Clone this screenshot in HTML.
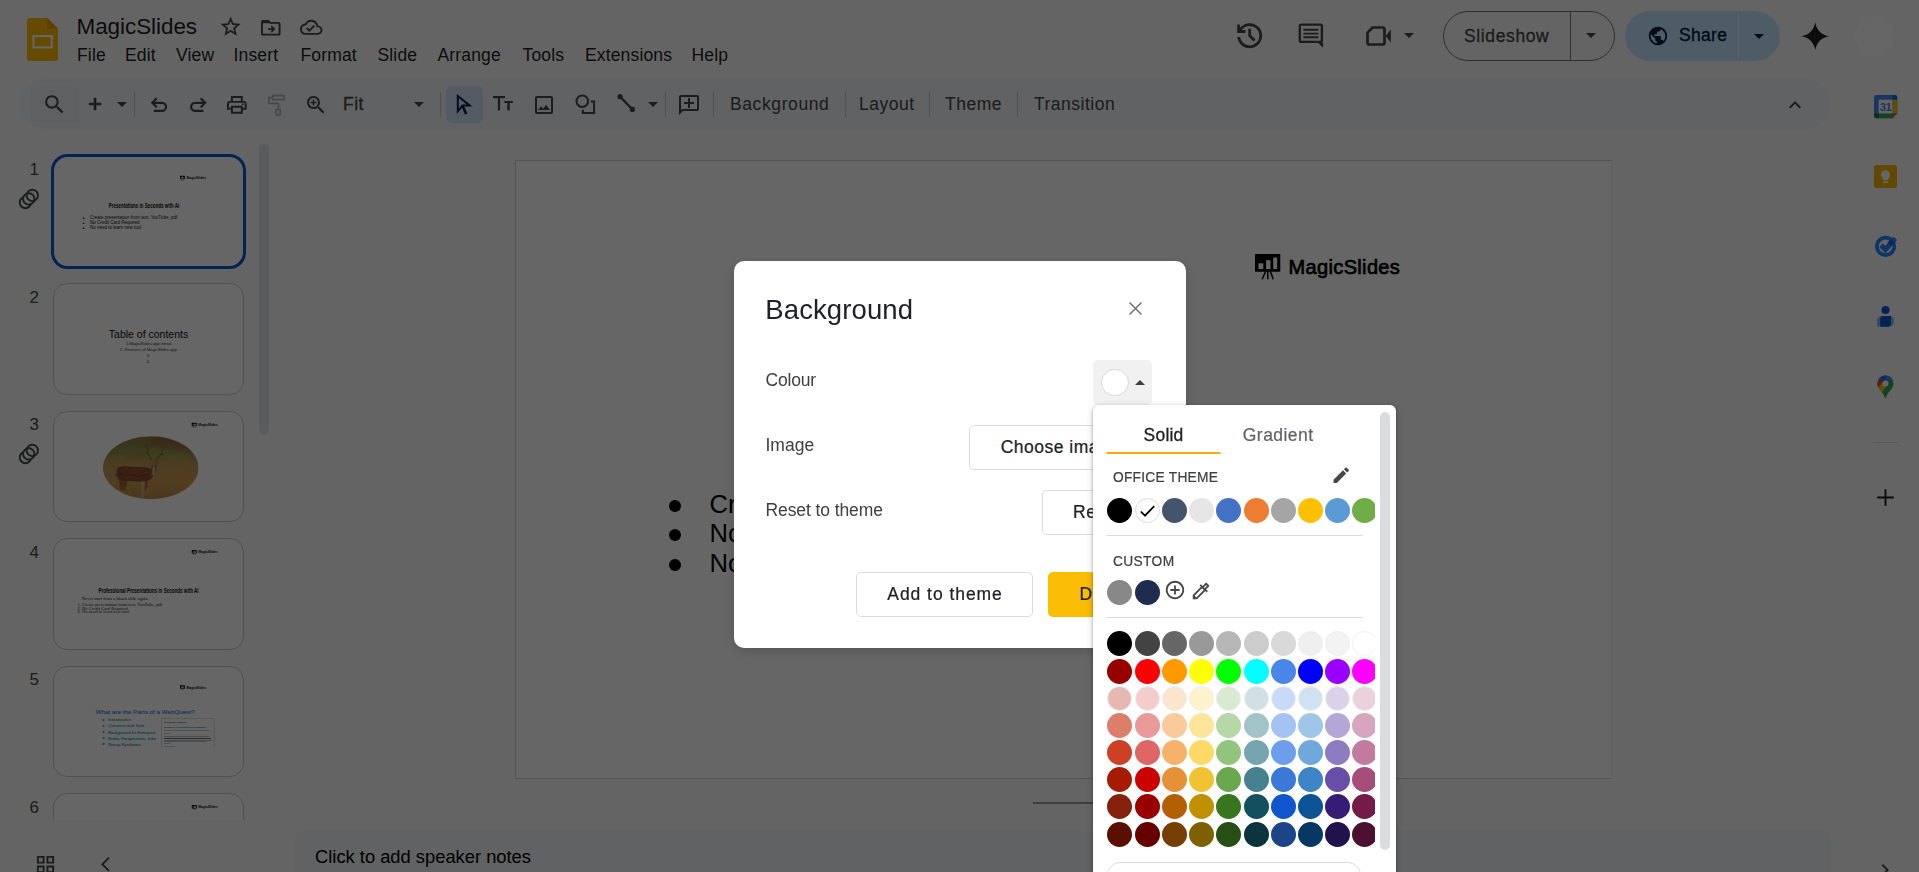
<!DOCTYPE html>
<html lang="en">
<head>
<meta charset="utf-8">
<title>MagicSlides - Google Slides</title>
<style>
*{box-sizing:border-box;margin:0;padding:0}
html,body{width:1919px;height:872px;overflow:hidden;background:#f9fbfd}
body{font-family:"Liberation Sans",Arial,sans-serif;color:#1f1f1f;position:relative}
.abs{position:absolute}
.t{position:absolute;white-space:nowrap;line-height:1}
svg{position:absolute;overflow:visible}
#app{position:absolute;left:0;top:0;width:1919px;height:872px;overflow:hidden}
.menu{font-size:17.5px;color:#1f1f1f;top:47.2px;letter-spacing:.15px}
.tb{font-size:17.5px;color:#444746;top:96.2px}
.sep{position:absolute;width:1px;background:#c4c7c5;top:92px;height:25px}
.num{position:absolute;font-size:17px;color:#444746;width:30px;text-align:right;left:9px;line-height:1}
.thumb{position:absolute;left:53px;width:191px;height:111.25px;border:1px solid #c7c7c7;border-radius:14px;background:#fff;overflow:hidden}
.thumb.sel{left:51px;width:195px;height:115.25px;border:3.4px solid #0b57d0;border-radius:16.5px}
.s4{position:absolute;left:0;top:0;width:756px;height:438px;transform:scale(.25);transform-origin:0 0}
#overlay{position:absolute;left:0;top:0;width:1919px;height:872px;background:rgba(0,0,0,.6)}
#dlg{position:absolute;left:734px;top:261px;width:452px;height:387px;background:#fff;border-radius:10px;box-shadow:0 3px 12px rgba(0,0,0,.18)}
.lbl{font-size:17.5px;color:#3c4043}
.btn{position:absolute;height:44px;border:1px solid #dadce0;border-radius:5px;background:#fff}
.btxt{font-size:17.5px;color:#202124;-webkit-text-stroke:.22px #202124;letter-spacing:.5px}
#pop{position:absolute;left:1093px;top:405px;width:303px;height:480px;background:#fff;border-radius:6px;box-shadow:0 1px 3px rgba(0,0,0,.3),0 2px 6px 1px rgba(0,0,0,.15);overflow:hidden}
.cap{font-size:13.75px;color:#3c4043;letter-spacing:1.1px;-webkit-text-stroke:.2px #3c4043}
.sw{position:absolute;width:25px;height:25px;border-radius:50%}
.hr{position:absolute;height:1px;background:#dadce0;left:13px;width:257px}
</style>
</head>
<body>
<div id="app">
<!-- ===== header ===== -->
<svg style="left:27px;top:18px" width="31" height="43" viewBox="0 0 31 43">
  <path d="M3 0h17.300L31 10.700V40a3 3 0 0 1-3 3H3a3 3 0 0 1-3-3V3a3 3 0 0 1 3-3z" fill="#fbbc04"/>
  <path d="M20.300 0L31 10.700H20.300z" fill="#f29900"/>
  <rect x="6.500" y="18.100" width="18.200" height="11.300" fill="none" stroke="#fff" stroke-width="2.100"/>
</svg>
<div class="t" style="left:76.5px;top:16px;font-size:22.5px;letter-spacing:-.07px;color:#1f1f1f">MagicSlides</div>
<svg style="left:218.900px;top:15.100px" width="23.300" height="23.300" viewBox="0 0 24 24" fill="#444746" stroke="#444746" stroke-width=".3"><path d="M22 9.240l-7.190-.62L12 2 9.190 8.630 2 9.240l5.460 4.730L5.820 21 12 17.270 18.180 21l-1.630-7.030L22 9.240zM12 15.400l-3.760 2.270 1-4.280-3.320-2.880 4.380-.38L12 6.100l1.710 4.040 4.380.38-3.320 2.880 1 4.280L12 15.400z"/></svg>
<svg style="left:259px;top:16.200px" width="23.500" height="23.500" viewBox="0 0 24 24" fill="#444746"><path d="M20 6h-8l-2-2H4c-1.100 0-2 .9-2 2v12c0 1.100.9 2 2 2h16c1.100 0 2-.9 2-2V8c0-1.100-.9-2-2-2zm0 12H4V6h5.170l2 2H20v10z"/><path d="M3 5h7l2 2.500H3z"/><path d="M9.300 12.400h4l-1.400-1.400 1.200-1.200 3.600 3.600-3.600 3.600-1.200-1.200 1.400-1.400H9.300z"/></svg>
<svg style="left:300px;top:15.5px" width="22.5" height="22.5" viewBox="0 0 24 24" fill="#444746"><path d="M19.35 10.04C18.67 6.59 15.64 4 12 4 9.11 4 6.6 5.64 5.35 8.04 2.34 8.36 0 10.91 0 14c0 3.31 2.69 6 6 6h13c2.76 0 5-2.24 5-5 0-2.64-2.05-4.78-4.65-4.96zM19 18H6c-2.21 0-4-1.79-4-4 0-2.05 1.53-3.76 3.56-3.97l1.07-.11.5-.95C8.08 7.14 9.94 6 12 6c2.62 0 4.88 1.86 5.39 4.43l.3 1.5 1.53.11c1.56.1 2.78 1.41 2.78 2.96 0 1.65-1.35 3-3 3zm-9-3.82l-2.09-2.09L6.5 13.5 10 17l6.01-6.01-1.41-1.41z"/></svg>
<div class="t menu" style="left:77px">File</div>
<div class="t menu" style="left:125px">Edit</div>
<div class="t menu" style="left:176px">View</div>
<div class="t menu" style="left:233.5px">Insert</div>
<div class="t menu" style="left:300.5px">Format</div>
<div class="t menu" style="left:377.5px">Slide</div>
<div class="t menu" style="left:437.5px">Arrange</div>
<div class="t menu" style="left:522.5px">Tools</div>
<div class="t menu" style="left:585px">Extensions</div>
<div class="t menu" style="left:691.5px">Help</div>
<!-- header right -->
<svg style="left:1232.700px;top:19.100px" width="33.330" height="33.330" viewBox="0 0 24 24" fill="#444746"><path d="M12 21q-3.450 0-6.012-2.287T3.050 13H5.100q.35 2.600 2.313 4.300T12 19q2.925 0 4.963-2.037T19 12t-2.037-4.963T12 5q-1.725 0-3.225.8T6.250 8H9v2H3V4h2v2.350q1.275-1.600 3.113-2.475T12 3q1.875 0 3.513.713t2.850 1.924 1.925 2.850T21 12t-.712 3.513-1.925 2.850-2.850 1.925T12 21m2.800-4.800L11 12.400V7h2v4.600l3.200 3.200z"/></svg>
<svg style="left:1296px;top:20px" width="30" height="30" viewBox="0 0 30 30"><rect x="3.800" y="4.600" width="22.100" height="17.300" rx="1.600" fill="none" stroke="#444746" stroke-width="2.400"/><path d="M21.600 22.500h5.500v5.300z" fill="#444746"/><path d="M7.400 9.800h15M7.400 13.600h15M7.400 17.300h15" stroke="#444746" stroke-width="1.900"/></svg>
<svg style="left:1364px;top:22px" width="28" height="28" viewBox="0 0 28 28"><path d="M8.600 5.500H18.500a2 2 0 0 1 2 2v13a2 2 0 0 1-2 2H5.500a2 2 0 0 1-2-2V10.600z" fill="none" stroke="#444746" stroke-width="2.700" stroke-linejoin="round"/><path d="M21.700 13.900l5.200-6.300v12.900z" fill="#444746"/></svg>
<svg style="left:1396.900px;top:22.900px" width="24" height="24" viewBox="0 0 24 24" fill="#444746"><path d="M7 10l5 5 5-5z"/></svg>
<div class="abs" style="left:1443px;top:11px;width:172px;height:50px;border:1px solid #747775;border-radius:25px"></div>
<div class="abs" style="left:1570px;top:11px;width:1px;height:50px;background:#747775"></div>
<div class="t" style="left:1464px;top:28px;font-size:17.5px;color:#444746;letter-spacing:.62px;-webkit-text-stroke:.3px #444746">Slideshow</div>
<svg style="left:1579px;top:23px" width="24" height="24" viewBox="0 0 24 24" fill="#444746"><path d="M7 10l5 5 5-5z"/></svg>
<div class="abs" style="left:1625px;top:11px;width:155px;height:50px;background:#c2e7ff;border-radius:25px"></div>
<div class="abs" style="left:1738px;top:11px;width:1px;height:50px;background:#f9fbfd;opacity:.7"></div>
<svg style="left:1646.5px;top:24.5px" width="22" height="22" viewBox="0 0 24 24" fill="#001d35"><path d="M12 2C6.48 2 2 6.48 2 12s4.48 10 10 10 10-4.48 10-10S17.52 2 12 2zm-1 17.93c-3.95-.49-7-3.85-7-7.93 0-.62.08-1.21.21-1.79L9 15v1c0 1.1.9 2 2 2v1.93zm6.9-2.54c-.26-.81-1-1.39-1.9-1.39h-1v-3c0-.55-.45-1-1-1H8v-2h2c.55 0 1-.45 1-1V7h2c1.1 0 2-.9 2-2v-.41c2.93 1.19 5 4.06 5 7.41 0 2.08-.8 3.97-2.1 5.39z"/></svg>
<div class="t" style="left:1679px;top:27px;font-size:17.5px;color:#001d35;letter-spacing:.3px;-webkit-text-stroke:.35px #001d35">Share</div>
<svg style="left:1747px;top:24.100px" width="24" height="24" viewBox="0 0 24 24" fill="#001d35"><path d="M7 10l5 5 5-5z"/></svg>
<svg style="left:1801.300px;top:21.800px" width="28.500" height="28.500" viewBox="0 0 24 24" fill="#1f1f1f"><path d="M12 0C12.700 6.500 17.500 11.300 24 12 17.500 12.700 12.700 17.500 12 24 11.300 17.500 6.500 12.700 0 12 6.500 11.300 11.300 6.500 12 0z"/></svg>
<div class="abs" style="left:1855px;top:16px;width:40px;height:40px;border-radius:50%;background:#fff"></div>
<!-- ===== toolbar ===== -->
<div class="abs" style="left:20px;top:79px;width:1810px;height:50px;border-radius:25px;background:#f0f4f9"></div>
<div class="abs" style="left:31px;top:87px;width:48px;height:35px;border-radius:4px;background:#ebeff6"></div>
<svg style="left:41.500px;top:91.500px" width="25" height="25" viewBox="0 0 24 24" fill="#444746"><path d="M15.5 14h-.79l-.28-.27A6.471 6.471 0 0 0 16 9.500 6.500 6.500 0 1 0 9.500 16c1.610 0 3.090-.59 4.230-1.570l.27.28v.79l5 4.990L20.490 19l-4.990-5zm-6 0C7.010 14 5 11.990 5 9.500S7.010 5 9.500 5 14 7.010 14 9.500 11.990 14 9.500 14z"/></svg>
<svg style="left:83.300px;top:91.500px" width="24" height="24" viewBox="0 0 24 24" fill="none" stroke="#444746" stroke-width="2.600"><path d="M12 5.800v12.400M5.800 12h12.400"/></svg>
<svg style="left:110px;top:92px" width="24" height="24" viewBox="0 0 24 24" fill="#444746"><path d="M7 10l5 5 5-5z"/></svg>
<div class="sep" style="left:134px"></div>
<svg style="left:148px;top:92px" width="24" height="24" viewBox="0 0 24 24" fill="none" stroke="#444746" stroke-width="2.200"><path d="M8.800 6.300L4.300 10.800l4.500 4.500"/><path d="M4.600 10.800H14a4.050 4.050 0 0 1 0 8.100H5.800"/></svg>
<svg style="left:186.500px;top:92px" width="24" height="24" viewBox="0 0 24 24" fill="none" stroke="#444746" stroke-width="2.200"><path d="M13.700 6.300l4.500 4.500-4.500 4.500"/><path d="M17.900 10.800H8.150a4.050 4.050 0 0 0 0 8.100h8.350"/></svg>
<svg style="left:225.400px;top:93.200px" width="23.700" height="23.700" viewBox="0 0 24 24" fill="#444746"><path d="M19 8h-1V3H6v5H5c-1.660 0-3 1.340-3 3v6h4v4h12v-4h4v-6c0-1.660-1.340-3-3-3zM8 5h8v3H8V5zm8 12v2H8v-4h8v2zm2-2v-2H6v2H4v-4c0-.55.45-1 1-1h14c.55 0 1 .45 1 1v4h-2z"/><circle cx="18" cy="11.500" r="1"/></svg>
<svg style="left:264px;top:92px" width="24" height="24" viewBox="0 0 24 24" fill="none" stroke="#b3b5b9" stroke-width="1.700" stroke-linejoin="round"><rect x="8.500" y="3.700" width="11.500" height="4"/><path d="M8.500 5.700H4.800v5.600h9.600v5.300"/><rect x="12.200" y="17.400" width="4" height="5.400"/></svg>
<svg style="left:304.400px;top:92.500px" width="24" height="24" viewBox="0 0 24 24" fill="#444746"><path d="M15.500 14h-.79l-.28-.27C15.410 12.590 16 11.110 16 9.500 16 5.910 13.090 3 9.500 3S3 5.910 3 9.500 5.910 16 9.500 16c1.610 0 3.090-.59 4.230-1.570l.27.28v.79l5 4.990L20.490 19l-4.990-5zm-6 0C7.010 14 5 11.990 5 9.500S7.010 5 9.500 5 14 7.010 14 9.500 11.990 14 9.500 14zm3-3.750h-2.250v2.250h-1.500v-2.250H6.500v-1.500h2.250V6.500h1.500v2.250h2.250v1.500z"/></svg>
<div class="t tb" style="left:343px;letter-spacing:.5px;-webkit-text-stroke:.3px #444746">Fit</div>
<svg style="left:407px;top:92px" width="24" height="24" viewBox="0 0 24 24" fill="#444746"><path d="M7 10l5 5 5-5z"/></svg>
<div class="sep" style="left:440px"></div>
<div class="abs" style="left:446px;top:86px;width:37px;height:37px;border-radius:6px;background:#d3e3fd"></div>
<svg style="left:452px;top:92px" width="24" height="24" viewBox="0 0 24 24" fill="none" stroke="#041e49" stroke-width="2" stroke-linejoin="miter"><path d="M5.800 4v15.300l4.700-5.700h7.300z"/><path d="M10.300 13.300l3.900 8.700" stroke-width="2.600"/></svg>
<svg style="left:490px;top:92px" width="24" height="24" viewBox="0 0 24 24" fill="#444746"><path d="M3 4.100h12v2.100h-4.900v12.400H7.900V6.200H3zM14.400 9.100h8.400v1.900h-3.100v7.600h-2.400V11h-2.900z"/></svg>
<svg style="left:532px;top:93px" width="24" height="24" viewBox="0 0 24 24" fill="#444746"><path d="M19 5v14H5V5h14m0-2H5c-1.100 0-2 .9-2 2v14c0 1.100.9 2 2 2h14c1.100 0 2-.9 2-2V5c0-1.100-.9-2-2-2zm-4.860 8.860l-3 3.870L9 13.140 6 17h12l-3.860-5.140z"/></svg>
<svg style="left:573px;top:92px" width="24" height="24" viewBox="0 0 24 24" fill="none" stroke="#444746" stroke-width="2"><circle cx="9.300" cy="9.200" r="5.800"/><path d="M17.800 9.400H21.100v11.700H9.800V17.800"/></svg>
<svg style="left:613.500px;top:92px" width="24" height="24" viewBox="0 0 24 24" fill="#444746" stroke="#444746"><path d="M6.100 4.700L18.400 17.400" stroke-width="2.300"/><circle cx="6.100" cy="4.700" r="2.600" stroke="none"/><circle cx="18.400" cy="17.400" r="2.600" stroke="none"/></svg>
<svg style="left:641px;top:91.900px" width="24" height="24" viewBox="0 0 24 24" fill="#444746"><path d="M7 10l5 5 5-5z"/></svg>
<div class="sep" style="left:665px"></div>
<svg style="left:677px;top:92.500px" width="24" height="24" viewBox="0 0 24 24" fill="#444746"><path d="M2 4c0-1.100.9-2 2-2h16c1.100 0 2 .9 2 2v12c0 1.100-.9 2-2 2H6l-4 4V4zm2 13.170L5.170 16H20V4H4v13.170zM11 5h2v4h4v2h-4v4h-2v-4H7V9h4z"/></svg>
<div class="sep" style="left:713px"></div>
<div class="t tb" style="left:730px;letter-spacing:.6px">Background</div>
<div class="sep" style="left:845px"></div>
<div class="t tb" style="left:859px;letter-spacing:.5px">Layout</div>
<div class="sep" style="left:928.500px"></div>
<div class="t tb" style="left:945px;letter-spacing:.5px">Theme</div>
<div class="sep" style="left:1017px"></div>
<div class="t tb" style="left:1034px;letter-spacing:.5px">Transition</div>
<svg style="left:1783px;top:92.500px" width="24" height="24" viewBox="0 0 24 24" fill="#444746"><path d="M12 8l-6 6 1.410 1.410L12 10.830l4.590 4.580L18 14z"/></svg>
<!-- ===== right rail ===== -->
<svg style="left:1873.700px;top:94.800px" width="23.200" height="23.200" viewBox="0 0 23 23">
  <rect x="0" y="0" width="23" height="23" rx="2.300" fill="#4285f4"/>
  <rect x="18.300" y="4.700" width="4.700" height="13.600" fill="#fbbc04"/>
  <rect x="4.700" y="18.300" width="13.600" height="4.700" fill="#34a853"/>
  <path d="M0 18.300h4.700V23H2.300A2.300 2.300 0 0 1 0 20.700z" fill="#188038"/>
  <path d="M18.300 0H20.700A2.300 2.300 0 0 1 23 2.300V4.700H18.300z" fill="#1967d2"/>
  <path d="M18.300 23V18.300H23z" fill="#ea4335"/>
  <path d="M23 18.300V23H18.300z" fill="#f9fbfd"/>
  <rect x="4.700" y="4.700" width="13.600" height="13.600" fill="#fff"/>
  <text x="11.300" y="15.600" font-family="Liberation Sans, Arial, sans-serif" font-size="11" font-weight="bold" fill="#4285f4" text-anchor="middle" letter-spacing="-.6">31</text>
</svg>
<svg style="left:1874px;top:164.500px" width="23" height="23" viewBox="0 0 23 23">
  <rect width="23" height="23" rx="2.500" fill="#f4b400"/>
  <circle cx="11.500" cy="9.800" r="4.600" fill="#fff"/>
  <rect x="8.900" y="12.500" width="5.200" height="2.500" fill="#fff"/>
  <rect x="8.900" y="16.200" width="5.200" height="1.800" fill="#fff"/>
</svg>
<svg style="left:1873px;top:234px" width="26" height="26" viewBox="0 0 26 26">
  <circle cx="12.600" cy="12.300" r="8.750" fill="none" stroke="#2684fc" stroke-width="3.700"/>
  <path d="M8.050 11.200l4.350 4.300 9.900-11.200" fill="none" stroke="#2684fc" stroke-width="5" stroke-linejoin="miter"/>
  <path d="M17.500 5.200l3.300 3.700 -2.400 2.700 -3.600-3.400z" fill="#0b57d0" opacity=".8"/>
</svg>
<svg style="left:1876px;top:305px" width="19" height="23" viewBox="0 0 19 23">
  <circle cx="9.500" cy="5" r="4.100" fill="#0b57d0"/>
  <path d="M1 21.700V16a5 5 0 0 1 5-5h8a4 4 0 0 1 4 4v1.700a5 5 0 0 1-5 5z" fill="#8ab4f8"/>
  <path d="M4.200 21.700V14a3 3 0 0 1 3-3h7.800v7.700a3 3 0 0 1-3 3z" fill="#0b57d0"/>
</svg>
<svg style="left:1877px;top:374.500px" width="17" height="24" viewBox="0 0 17 24">
  <defs><clipPath id="pin"><path d="M8.450 0.400A8.050 8.050 0 0 0 0.400 8.450C0.400 13 4 15 6.500 19.500Q7.600 21.500 8 23Q8.450 23.800 8.900 23Q9.300 21.500 10.400 19.500C12.900 15 16.500 13 16.500 8.450A8.050 8.050 0 0 0 8.450 0.400z"/></clipPath></defs>
  <g clip-path="url(#pin)">
    <rect width="17" height="24" fill="#34a853"/>
    <path d="M0 0h17v3.500L15.500 4.700 8.500 8.400 5.660 7.240 2.680 3.340 0 3z" fill="#4285f4"/>
    <path d="M0 0h9L8.500 8.400 5.660 7.240 2.680 3.340 0 3z" fill="#1a73e8"/>
    <path d="M0 3L2.680 3.340 5.660 7.240 1.760 12.060 0 13z" fill="#ea4335"/>
    <path d="M0 13L1.760 12.060 5.660 7.240 8.500 8.400 9.560 11.370 4.970 17.100 0 19z" fill="#fbbc04"/>
  </g>
  <circle cx="8.500" cy="8.400" r="3" fill="#fff"/>
</svg>
<div class="abs" style="left:1873px;top:442px;width:25px;height:1px;background:#dadce0"></div>
<svg style="left:1875px;top:487px" width="21" height="21" viewBox="0 0 24 24" fill="#1f1f1f"><path d="M21.500 13.100h-8.400v8.400h-2.200v-8.400H2.500v-2.200h8.400V2.500h2.200v8.400h8.400z"/></svg>
<!-- ===== filmstrip ===== -->
<div class="abs" id="film" style="left:0;top:140px;width:285px;height:680px;overflow:hidden">
<div class="abs" style="left:259px;top:4px;width:10px;height:290.500px;border-radius:5px;background:#e3e5ea"></div>
<!-- numbers -->
<div class="num" style="top:21.200px">1</div>
<div class="num" style="top:148.700px">2</div>
<div class="num" style="top:276.200px">3</div>
<div class="num" style="top:403.600px">4</div>
<div class="num" style="top:531.100px">5</div>
<div class="num" style="top:658.600px">6</div>
<!-- link icons -->
<svg style="left:17px;top:47px" width="24" height="24" viewBox="0 0 24 24" fill="none" stroke="#444746" stroke-width="1.900"><circle cx="8.400" cy="15.500" r="5.700"/><circle cx="11.800" cy="11.900" r="5.700" fill="#f9fbfd"/><circle cx="15.300" cy="8.400" r="5.700"/></svg>
<svg style="left:17px;top:302px" width="24" height="24" viewBox="0 0 24 24" fill="none" stroke="#444746" stroke-width="1.900"><circle cx="8.400" cy="15.500" r="5.700"/><circle cx="11.800" cy="11.900" r="5.700" fill="#f9fbfd"/><circle cx="15.300" cy="8.400" r="5.700"/></svg>
<!-- thumb 1 -->
<div class="thumb sel" style="top:13.600px"><div class="s4" style="left:-.5px;top:-.4px">
  <svg style="left:504px;top:79px" width="22" height="20" viewBox="0 0 22 20"><rect x="0" y="0" width="20" height="14" rx="2" fill="#111"/><rect x="4" y="6" width="3" height="6" fill="#fff"/><rect x="9" y="3" width="3" height="9" fill="#fff"/><rect x="14" y="5" width="3" height="7" fill="#fff"/><path d="M8 14l-2 6M12 14l2 6" stroke="#111" stroke-width="1.500"/></svg>
  <div class="t" style="left:530px;top:81px;font-size:13.500px;font-weight:bold;color:#111">MagicSlides</div>
  <div class="t" style="left:0;width:720px;top:184px;text-align:center;font-size:26px;font-weight:bold;color:#111;transform:scaleX(.69)">Presentations in Seconds with AI</div>
  <div class="t" style="left:114px;top:236px;font-size:24px;color:#111">&#8226;</div>
  <div class="t" style="left:114px;top:256px;font-size:24px;color:#111">&#8226;</div>
  <div class="t" style="left:114px;top:276px;font-size:24px;color:#111">&#8226;</div>
  <div class="t" style="left:144px;top:238px;font-size:18px;color:#111">Create presentation from text, YouTube, pdf</div>
  <div class="t" style="left:144px;top:258px;font-size:18px;color:#111">No Credit Card Required</div>
  <div class="t" style="left:144px;top:278px;font-size:18px;color:#111">No need to learn new tool</div>
</div></div>
<!-- thumb 2 -->
<div class="thumb" style="top:143.200px;height:111.700px"><div class="s4">
  <div class="t" style="left:0;width:756px;top:180px;text-align:center;font-size:42px;color:#111">Table of contents</div>
  <div class="t" style="left:0;width:756px;top:229px;text-align:center;font-size:16.500px;color:#333">1.MagicSlides.app introd</div>
  <div class="t" style="left:0;width:756px;top:252px;text-align:center;font-size:16.500px;color:#333">2. Features of MagicSlides.app</div>
  <div class="t" style="left:0;width:756px;top:277px;text-align:center;font-size:16.500px;color:#333">3.</div>
  <div class="t" style="left:0;width:756px;top:300px;text-align:center;font-size:16.500px;color:#333">4.</div>
</div></div>
<!-- thumb 3 -->
<div class="thumb" style="top:271px;height:110.900px"><div class="s4">
  <svg style="left:551px;top:43px" width="22" height="20" viewBox="0 0 22 20"><rect x="0" y="0" width="20" height="14" rx="2" fill="#111"/><rect x="4" y="6" width="3" height="6" fill="#fff"/><rect x="9" y="3" width="3" height="9" fill="#fff"/><rect x="14" y="5" width="3" height="7" fill="#fff"/><path d="M8 14l-2 6M12 14l2 6" stroke="#111" stroke-width="1.500"/></svg>
  <div class="t" style="left:577px;top:45px;font-size:13.500px;font-weight:bold;color:#111">MagicSlides</div>
  <svg style="left:195.600px;top:96.800px" width="382" height="252" viewBox="0 0 382 252">
    <defs>
      <clipPath id="ell"><ellipse cx="191" cy="126" rx="191" ry="126"/></clipPath>
      <linearGradient id="gr" x1="0" y1="0" x2="0" y2="1"><stop offset="0" stop-color="#867a44"/><stop offset=".28" stop-color="#958a4a"/><stop offset=".42" stop-color="#bc9856"/><stop offset=".75" stop-color="#c89a54"/><stop offset="1" stop-color="#be8a46"/></linearGradient>
      <filter id="bl" x="-10%" y="-10%" width="120%" height="120%"><feGaussianBlur stdDeviation="5"/></filter>
    </defs>
    <g clip-path="url(#ell)">
      <rect width="382" height="252" fill="url(#gr)"/>
      <g filter="url(#bl)">
        <path d="M190 0h192v70q-70-35-190-30z" fill="#96603c" opacity=".6"/>
        <ellipse cx="110" cy="55" rx="60" ry="20" fill="#8fa84e" opacity=".3"/>
        <ellipse cx="215" cy="70" rx="50" ry="18" fill="#9fc25a" opacity=".28"/>
        <ellipse cx="300" cy="82" rx="45" ry="14" fill="#9fc25a" opacity=".3"/>
        <ellipse cx="60" cy="85" rx="40" ry="12" fill="#a8a050" opacity=".7"/>
        <ellipse cx="330" cy="170" rx="50" ry="30" fill="#d9923e" opacity=".35"/>
      </g>
      <!-- deer -->
      <path d="M192 94L181 70 172 32M181 70l-8-4M212 94l20-22 12-30M232 72l10 2" stroke="#7a6038" stroke-width="4.500" fill="none" stroke-linecap="round"/>
      <path d="M154 176l2 70h5l3-70z" fill="#cbb58c"/>
      <path d="M170 174l-2 42h5l6-42z" fill="#8a5a34"/>
      <path d="M62 168l8 48h8l5-40zM86 174l-6 42h7l12-40z" fill="#9a5a30"/>
      <path d="M55 140q-3-18 25-20l90 4q25 4 35 26-5 20-25 28l-30 4-55-4q-25 2-35-8z" fill="#8a4c2a"/>
      <path d="M56 138l-6 22 6 3z" fill="#7a4526"/>
      <path d="M184 152l12-34q2-18 10-23l10 3q6 10-2 22l-4 20q-5 20-20 25z" fill="#8c5430"/>
      <path d="M200 120l8 4-3 26-9 10z" fill="#d8c8a8"/>
      <path d="M198 96l16 2 2 14-8 10-10-6z" fill="#a88a60"/>
      <g fill="#d8b88a" opacity=".8"><circle cx="78" cy="134" r="2.200"/><circle cx="94" cy="130" r="2.200"/><circle cx="110" cy="135" r="2.200"/><circle cx="126" cy="131" r="2.200"/><circle cx="142" cy="136" r="2.200"/><circle cx="158" cy="133" r="2.200"/><circle cx="86" cy="148" r="2.200"/><circle cx="102" cy="152" r="2.200"/><circle cx="120" cy="148" r="2.200"/><circle cx="136" cy="154" r="2.200"/><circle cx="152" cy="150" r="2.200"/><circle cx="170" cy="146" r="2.200"/><circle cx="94" cy="164" r="2.200"/><circle cx="114" cy="166" r="2.200"/><circle cx="134" cy="168" r="2.200"/></g>
      <path d="M60 150l120 8" stroke="#5a3018" stroke-width="3" opacity=".5"/>
    </g>
  </svg>
</div></div>
<!-- thumb 4 -->
<div class="thumb" style="top:398px;height:111.700px"><div class="s4" style="font-family:'Liberation Serif',serif">
  <svg style="left:551px;top:44px" width="22" height="20" viewBox="0 0 22 20"><rect x="0" y="0" width="20" height="14" rx="2" fill="#111"/><rect x="4" y="6" width="3" height="6" fill="#fff"/><rect x="9" y="3" width="3" height="9" fill="#fff"/><rect x="14" y="5" width="3" height="7" fill="#fff"/><path d="M8 14l-2 6M12 14l2 6" stroke="#111" stroke-width="1.500"/></svg>
  <div class="t" style="left:577px;top:46px;font-size:13.500px;font-weight:bold;color:#111;font-family:'Liberation Sans',sans-serif">MagicSlides</div>
  <div class="t" style="left:18px;width:720px;top:195px;text-align:center;font-size:26px;font-weight:bold;color:#111;transform:scaleX(.7);font-family:'Liberation Sans',sans-serif">Professional Presentations in Seconds with AI</div>
  <div class="t" style="left:111px;top:229px;font-size:18.400px;color:#222">Never start from a blank slide again.</div>
  <div class="t" style="left:94px;top:254px;font-size:18.200px;color:#222">1. Create presentation from text, YouTube, pdf</div>
  <div class="t" style="left:94px;top:269px;font-size:18.200px;color:#222">2. No Credit Card Required</div>
  <div class="t" style="left:94px;top:282px;font-size:18.200px;color:#222">3. No need to learn new tool</div>
</div></div>
<!-- thumb 5 -->
<div class="thumb" style="top:526px;height:110.900px"><div class="s4">
  <svg style="left:504px;top:73px" width="22" height="20" viewBox="0 0 22 20"><rect x="0" y="0" width="20" height="14" rx="2" fill="#111"/><rect x="4" y="6" width="3" height="6" fill="#fff"/><rect x="9" y="3" width="3" height="9" fill="#fff"/><rect x="14" y="5" width="3" height="7" fill="#fff"/><path d="M8 14l-2 6M12 14l2 6" stroke="#111" stroke-width="1.500"/></svg>
  <div class="t" style="left:530px;top:75px;font-size:13.500px;font-weight:bold;color:#111">MagicSlides</div>
  <div class="t" style="left:167px;top:168px;font-size:25px;color:#4280e8;-webkit-text-stroke:.5px #4280e8">What are the Parts of a WebQuest?</div>
  <div class="t" style="left:195px;top:203px;font-size:17.500px;color:#1aa3c0;transform:scale(1.5)">&#8226;</div>
  <div class="t" style="left:195px;top:227px;font-size:17.500px;color:#1aa3c0;transform:scale(1.5)">&#8226;</div>
  <div class="t" style="left:195px;top:252px;font-size:17.500px;color:#1aa3c0;transform:scale(1.5)">&#8226;</div>
  <div class="t" style="left:195px;top:276px;font-size:17.500px;color:#1aa3c0;transform:scale(1.5)">&#8226;</div>
  <div class="t" style="left:195px;top:300px;font-size:17.500px;color:#1aa3c0;transform:scale(1.5)">&#8226;</div>
  <div class="t" style="left:216px;top:203px;font-size:17.500px;color:#1aa3c0;-webkit-text-stroke:.4px #1aa3c0">Introduction</div>
  <div class="t" style="left:216px;top:227px;font-size:17.500px;color:#1aa3c0;-webkit-text-stroke:.4px #1aa3c0">Question and Task</div>
  <div class="t" style="left:216px;top:252px;font-size:17.500px;color:#1aa3c0;-webkit-text-stroke:.4px #1aa3c0;letter-spacing:-.35px">Background for Everyone</div>
  <div class="t" style="left:216px;top:276px;font-size:17.500px;color:#1aa3c0;-webkit-text-stroke:.4px #1aa3c0;letter-spacing:-.4px">Roles, Perspectives, Jobs</div>
  <div class="t" style="left:216px;top:300px;font-size:17.500px;color:#1aa3c0;-webkit-text-stroke:.4px #1aa3c0">Group Synthesis</div>
  <div class="abs" style="left:429px;top:205px;width:213px;height:116px;border:3px solid #cfcfcf;border-bottom:none;background:#fff;overflow:hidden">
    <div class="t" style="left:8px;top:6px;font-size:9.500px;font-weight:bold;color:#1c5a80">WebQuest Template</div>
    <div class="t" style="left:8px;top:27px;font-size:8.500px;font-weight:bold;color:#2a6aa8">Webquest: The Question to the Webpage</div>
    <div class="abs" style="left:8px;top:45px;width:185px;height:2px;background:#6fa0c8"></div>
    <div class="abs" style="left:8px;top:58px;width:28px;height:2px;background:#6fa0c8"></div>
    <div class="abs" style="left:8px;top:70px;width:180px;height:2px;background:#777"></div>
    <div class="abs" style="left:8px;top:76px;width:188px;height:3px;background:#333"></div>
    <div class="abs" style="left:8px;top:84px;width:190px;height:2px;background:#777"></div>
    <div class="abs" style="left:8px;top:90px;width:170px;height:2px;background:#6b8fb0"></div>
    <div class="abs" style="left:8px;top:96px;width:24px;height:2px;background:#888"></div>
    <div class="abs" style="left:8px;top:109px;width:44px;height:2px;background:#6fa0c8"></div>
  </div>
</div></div>
<!-- thumb 6 -->
<div class="thumb" style="top:653px"><div class="s4">
  <svg style="left:551px;top:44px" width="22" height="20" viewBox="0 0 22 20"><rect x="0" y="0" width="20" height="14" rx="2" fill="#111"/><rect x="4" y="6" width="3" height="6" fill="#fff"/><rect x="9" y="3" width="3" height="9" fill="#fff"/><rect x="14" y="5" width="3" height="7" fill="#fff"/><path d="M8 14l-2 6M12 14l2 6" stroke="#111" stroke-width="1.500"/></svg>
  <div class="t" style="left:577px;top:46px;font-size:13.500px;font-weight:bold;color:#111">MagicSlides</div>
</div></div>
</div>
<!-- bottom-left controls -->
<svg style="left:34px;top:853px" width="23" height="23" viewBox="0 0 24 24" fill="#444746"><path d="M3 3v8h8V3H3zm6 6H5V5h4v4zm-6 4v8h8v-8H3zm6 6H5v-4h4v4zm4-16v8h8V3h-8zm6 6h-4V5h4v4zm-6 4v8h8v-8h-8zm6 6h-4v-4h4v4z"/></svg>
<svg style="left:93px;top:852px" width="26" height="26" viewBox="0 0 26 26" fill="none" stroke="#444746" stroke-width="1.900"><path d="M16 5.700l-6.600 6.600 6.600 6.600"/></svg>
<svg style="left:1873px;top:858px" width="24" height="24" viewBox="0 0 24 24" fill="#444746"><path d="M10 6L8.590 7.410 13.170 12l-4.580 4.590L10 18l6-6z"/></svg>
<!-- ===== canvas ===== -->
<div class="abs" id="slide" style="left:515px;top:160px;width:1097px;height:619px;background:#fff;border:1px solid #cfcfcf;border-right-color:#f1f1f1">
  <!-- logo -->
  <svg style="left:738.700px;top:92.900px" width="26" height="27" viewBox="0 0 26 27"><rect x="0" y="0" width="25.300" height="17.700" rx=".6" fill="#000"/><rect x="3.500" y="9.300" width="4.800" height="5.800" fill="#fff"/><rect x="11.100" y="6.200" width="4.400" height="8.900" fill="#fff"/><rect x="18.200" y="3.500" width="4" height="11.600" fill="#fff"/><path d="M10.600 17.500L7.100 25.200M12.800 17.500V25.200M15.500 17.500L18.200 25.200" stroke="#000" stroke-width="1.500" fill="none"/></svg>
  <div class="t" style="left:772.600px;top:96.400px;font-size:20px;color:#000;letter-spacing:.34px;-webkit-text-stroke:.7px #000">MagicSlides</div>
  <!-- bullets -->
  <div class="abs" style="left:153px;top:338.800px;width:12px;height:12px;border-radius:50%;background:#000"></div>
  <div class="abs" style="left:153px;top:368.300px;width:12px;height:12px;border-radius:50%;background:#000"></div>
  <div class="abs" style="left:153px;top:397.700px;width:12px;height:12px;border-radius:50%;background:#000"></div>
  <div class="t" style="left:193.500px;top:330.600px;font-size:25.600px;color:#000">Create presentation from text, YouTube, pdf</div>
  <div class="t" style="left:193.500px;top:360.100px;font-size:25.600px;color:#000">No Credit Card Required</div>
  <div class="t" style="left:193.500px;top:389.500px;font-size:25.600px;color:#000">No need to learn new tool</div>
</div>
<div class="abs" style="left:1033px;top:802px;width:97px;height:2px;background:#9a9a9a"></div>
<div class="abs" style="left:295px;top:830px;width:1536px;height:60px;background:#f0f4f9;border-radius:10px 10px 0 0"></div>
<div class="t" style="left:315px;top:847.600px;font-size:18.330px;color:#000">Click to add speaker notes</div>
</div><!-- /app -->
<div id="overlay"></div>
<!-- ===== dialog ===== -->
<div id="dlg">
  <div class="t" style="left:31.300px;top:35.300px;font-size:27.500px;color:#202124;letter-spacing:.1px">Background</div>
  <svg style="left:394.500px;top:40.500px" width="13" height="13" viewBox="0 0 13 13" fill="none" stroke="#6f7377" stroke-width="1.500"><path d="M0.500 0.500l12 12M12.500 0.500l-12 12"/></svg>
  <div class="t lbl" style="left:31.500px;top:111.100px;letter-spacing:-.2px">Colour</div>
  <div class="abs" style="left:359px;top:99px;width:59px;height:44.500px;border-radius:5px;background:#f1f1f1"></div>
  <div class="abs" style="left:367.300px;top:107.500px;width:27.500px;height:27.500px;border-radius:50%;background:#fff;border:1px solid #d5d7e0"></div>
  <svg style="left:401px;top:119px" width="10" height="5" viewBox="0 0 10 5" fill="#3c4043"><path d="M0 5l5-5 5 5z"/></svg>
  <div class="t lbl" style="left:31.500px;top:175.600px">Image</div>
  <div class="btn" style="left:235px;top:164px;width:183px;height:44.800px"></div>
  <div class="t btxt" style="left:266.700px;top:177.700px">Choose image</div>
  <div class="t lbl" style="left:31.500px;top:240.800px;letter-spacing:-.1px">Reset to theme</div>
  <div class="btn" style="left:308px;top:229.400px;width:110px;height:44.900px"></div>
  <div class="t btxt" style="left:339px;top:242.800px">Reset</div>
  <div class="btn" style="left:122.200px;top:311.200px;width:176.500px;height:44.400px"></div>
  <div class="t btxt" style="left:153.300px;top:325px;letter-spacing:.95px">Add to theme</div>
  <div class="abs" style="left:314px;top:311.200px;width:104px;height:44.400px;border-radius:5px;background:#fbbc04"></div>
  <div class="t btxt" style="left:345.500px;top:325px">Done</div>
</div>
<!-- ===== colour popup ===== -->
<div id="pop">
  <div class="abs" style="left:287px;top:6.500px;width:9.600px;height:438px;border-radius:5px;background:#dadce0"></div>
  <div class="abs" id="popc" style="left:0;top:0;width:282px;height:480px;overflow:hidden">
  <div class="t" style="left:50.600px;top:22.200px;font-size:17.500px;color:#202124;letter-spacing:.2px;-webkit-text-stroke:.3px #202124">Solid</div>
  <div class="t" style="left:149.800px;top:22.200px;font-size:17.500px;color:#5f6368;letter-spacing:.45px;-webkit-text-stroke:.2px #5f6368">Gradient</div>
  <div class="abs" style="left:13.400px;top:46.500px;width:114.600px;height:2.300px;background:#f9ab00;border-radius:2px 2px 0 0"></div>
  <div class="t cap" style="left:20px;top:66.100px;letter-spacing:.25px">OFFICE THEME</div>
  <svg style="left:237.750px;top:60.250px" width="20.500" height="20.500" viewBox="0 0 24 24" fill="#444746"><path d="M3 17.250V21h3.750L17.810 9.940l-3.750-3.750L3 17.250zM20.710 7.040c.39-.39.39-1.020 0-1.410l-2.340-2.340c-.39-.39-1.020-.39-1.410 0l-1.830 1.830 3.750 3.750 1.830-1.830z"/></svg>
  <div class="sw" style="left:14px;top:93px;background:#000000"></div>
  <div class="sw" style="left:42px;top:93px;background:#ffffff;border:1px solid #dadce0"></div>
  <div class="sw" style="left:69px;top:93px;background:#44546a"></div>
  <div class="sw" style="left:96px;top:93px;background:#e7e6e6"></div>
  <div class="sw" style="left:123px;top:93px;background:#4472c4"></div>
  <div class="sw" style="left:151px;top:93px;background:#ed7d31"></div>
  <div class="sw" style="left:178px;top:93px;background:#a5a5a5"></div>
  <div class="sw" style="left:205px;top:93px;background:#ffc000"></div>
  <div class="sw" style="left:232px;top:93px;background:#5b9bd5"></div>
  <div class="sw" style="left:259px;top:93px;background:#70ad47"></div>
  <svg style="left:46.500px;top:99.500px" width="15" height="12" viewBox="0 0 15 12" fill="none" stroke="#000" stroke-width="1.700"><path d="M0.800 6.500l4.200 4.200L14.200 1.200"/></svg>
  <div class="hr" style="top:130px"></div>
  <div class="t cap" style="left:20px;top:149.900px;letter-spacing:.35px">CUSTOM</div>
  <div class="sw" style="left:14px;top:175px;background:#888888"></div>
  <div class="sw" style="left:42px;top:175px;background:#1c2d50"></div>
  <svg style="left:70.600px;top:174.300px" width="22" height="22" viewBox="0 0 24 24" fill="#444746"><path d="M13 7h-2v4H7v2h4v4h2v-4h4v-2h-4V7zm-1-5C6.480 2 2 6.480 2 12s4.480 10 10 10 10-4.480 10-10S17.520 2 12 2zm0 18c-4.410 0-8-3.590-8-8s3.590-8 8-8 8 3.590 8 8-3.590 8-8 8z"/></svg>
  <svg style="left:97px;top:175px" width="22" height="22" viewBox="0 0 24 24" fill="#444746"><path d="M17.660 5.410l.92.92-2.690 2.690-.92-.92 2.690-2.690M17.670 3c-.26 0-.51.1-.71.29l-3.120 3.120-1.930-1.910-1.410 1.410 1.420 1.420L3 16.250V21h4.750l8.920-8.920 1.420 1.420 1.410-1.410-1.920-1.920 3.120-3.120c.4-.4.4-1.030.01-1.420l-2.340-2.340c-.2-.19-.45-.29-.7-.29zM6.920 19L5 17.080l8.060-8.060 1.920 1.920L6.920 19z"/></svg>
  <div class="hr" style="top:212px"></div>
  <div class="sw" style="left:14px;top:226px;background:#000000"></div>
  <div class="sw" style="left:42px;top:226px;background:#434343"></div>
  <div class="sw" style="left:69px;top:226px;background:#666666"></div>
  <div class="sw" style="left:96px;top:226px;background:#999999"></div>
  <div class="sw" style="left:123px;top:226px;background:#b7b7b7"></div>
  <div class="sw" style="left:151px;top:226px;background:#cccccc"></div>
  <div class="sw" style="left:178px;top:226px;background:#d9d9d9"></div>
  <div class="sw" style="left:205px;top:226px;background:#efefef;border:1px solid #eceef1"></div>
  <div class="sw" style="left:232px;top:226px;background:#f3f3f3;border:1px solid #eceef1"></div>
  <div class="sw" style="left:259px;top:226px;background:#ffffff;border:1px solid #eceef1"></div>
  <div class="sw" style="left:14px;top:254px;background:#980000"></div>
  <div class="sw" style="left:42px;top:254px;background:#ff0000"></div>
  <div class="sw" style="left:69px;top:254px;background:#ff9900"></div>
  <div class="sw" style="left:96px;top:254px;background:#ffff00"></div>
  <div class="sw" style="left:123px;top:254px;background:#00ff00"></div>
  <div class="sw" style="left:151px;top:254px;background:#00ffff"></div>
  <div class="sw" style="left:178px;top:254px;background:#4a86e8"></div>
  <div class="sw" style="left:205px;top:254px;background:#0000ff"></div>
  <div class="sw" style="left:232px;top:254px;background:#9900ff"></div>
  <div class="sw" style="left:259px;top:254px;background:#ff00ff"></div>
  <div class="sw" style="left:14px;top:281px;background:#e6b8af;border:1px solid #eceef1"></div>
  <div class="sw" style="left:42px;top:281px;background:#f4cccc;border:1px solid #eceef1"></div>
  <div class="sw" style="left:69px;top:281px;background:#fce5cd;border:1px solid #eceef1"></div>
  <div class="sw" style="left:96px;top:281px;background:#fff2cc;border:1px solid #eceef1"></div>
  <div class="sw" style="left:123px;top:281px;background:#d9ead3;border:1px solid #eceef1"></div>
  <div class="sw" style="left:151px;top:281px;background:#d0e0e3;border:1px solid #eceef1"></div>
  <div class="sw" style="left:178px;top:281px;background:#c9daf8;border:1px solid #eceef1"></div>
  <div class="sw" style="left:205px;top:281px;background:#cfe2f3;border:1px solid #eceef1"></div>
  <div class="sw" style="left:232px;top:281px;background:#d9d2e9;border:1px solid #eceef1"></div>
  <div class="sw" style="left:259px;top:281px;background:#ead1dc;border:1px solid #eceef1"></div>
  <div class="sw" style="left:14px;top:308px;background:#dd7e6b"></div>
  <div class="sw" style="left:42px;top:308px;background:#ea9999"></div>
  <div class="sw" style="left:69px;top:308px;background:#f9cb9c"></div>
  <div class="sw" style="left:96px;top:308px;background:#ffe599"></div>
  <div class="sw" style="left:123px;top:308px;background:#b6d7a8"></div>
  <div class="sw" style="left:151px;top:308px;background:#a2c4c9"></div>
  <div class="sw" style="left:178px;top:308px;background:#a4c2f4"></div>
  <div class="sw" style="left:205px;top:308px;background:#9fc5e8"></div>
  <div class="sw" style="left:232px;top:308px;background:#b4a7d6"></div>
  <div class="sw" style="left:259px;top:308px;background:#d5a6bd"></div>
  <div class="sw" style="left:14px;top:335px;background:#cc4125"></div>
  <div class="sw" style="left:42px;top:335px;background:#e06666"></div>
  <div class="sw" style="left:69px;top:335px;background:#f6b26b"></div>
  <div class="sw" style="left:96px;top:335px;background:#ffd966"></div>
  <div class="sw" style="left:123px;top:335px;background:#93c47d"></div>
  <div class="sw" style="left:151px;top:335px;background:#76a5af"></div>
  <div class="sw" style="left:178px;top:335px;background:#6d9eeb"></div>
  <div class="sw" style="left:205px;top:335px;background:#6fa8dc"></div>
  <div class="sw" style="left:232px;top:335px;background:#8e7cc3"></div>
  <div class="sw" style="left:259px;top:335px;background:#c27ba0"></div>
  <div class="sw" style="left:14px;top:362px;background:#a61c00"></div>
  <div class="sw" style="left:42px;top:362px;background:#cc0000"></div>
  <div class="sw" style="left:69px;top:362px;background:#e69138"></div>
  <div class="sw" style="left:96px;top:362px;background:#f1c232"></div>
  <div class="sw" style="left:123px;top:362px;background:#6aa84f"></div>
  <div class="sw" style="left:151px;top:362px;background:#45818e"></div>
  <div class="sw" style="left:178px;top:362px;background:#3c78d8"></div>
  <div class="sw" style="left:205px;top:362px;background:#3d85c6"></div>
  <div class="sw" style="left:232px;top:362px;background:#674ea7"></div>
  <div class="sw" style="left:259px;top:362px;background:#a64d79"></div>
  <div class="sw" style="left:14px;top:389px;background:#85200c"></div>
  <div class="sw" style="left:42px;top:389px;background:#990000"></div>
  <div class="sw" style="left:69px;top:389px;background:#b45f06"></div>
  <div class="sw" style="left:96px;top:389px;background:#bf9000"></div>
  <div class="sw" style="left:123px;top:389px;background:#38761d"></div>
  <div class="sw" style="left:151px;top:389px;background:#134f5c"></div>
  <div class="sw" style="left:178px;top:389px;background:#1155cc"></div>
  <div class="sw" style="left:205px;top:389px;background:#0b5394"></div>
  <div class="sw" style="left:232px;top:389px;background:#351c75"></div>
  <div class="sw" style="left:259px;top:389px;background:#741b47"></div>
  <div class="sw" style="left:14px;top:417px;background:#5b0f00"></div>
  <div class="sw" style="left:42px;top:417px;background:#660000"></div>
  <div class="sw" style="left:69px;top:417px;background:#783f04"></div>
  <div class="sw" style="left:96px;top:417px;background:#7f6000"></div>
  <div class="sw" style="left:123px;top:417px;background:#274e13"></div>
  <div class="sw" style="left:151px;top:417px;background:#0c343d"></div>
  <div class="sw" style="left:178px;top:417px;background:#1c4587"></div>
  <div class="sw" style="left:205px;top:417px;background:#073763"></div>
  <div class="sw" style="left:232px;top:417px;background:#20124d"></div>
  <div class="sw" style="left:259px;top:417px;background:#4c1130"></div>
  <div class="abs" style="left:14.400px;top:457px;width:253.600px;height:45px;border:1px solid #dadce0;border-radius:13px"></div>
  <div class="t" style="left:96px;top:471px;font-size:17.500px;color:#202124">Transparent</div>
  </div>
</div>
</body>
</html>
